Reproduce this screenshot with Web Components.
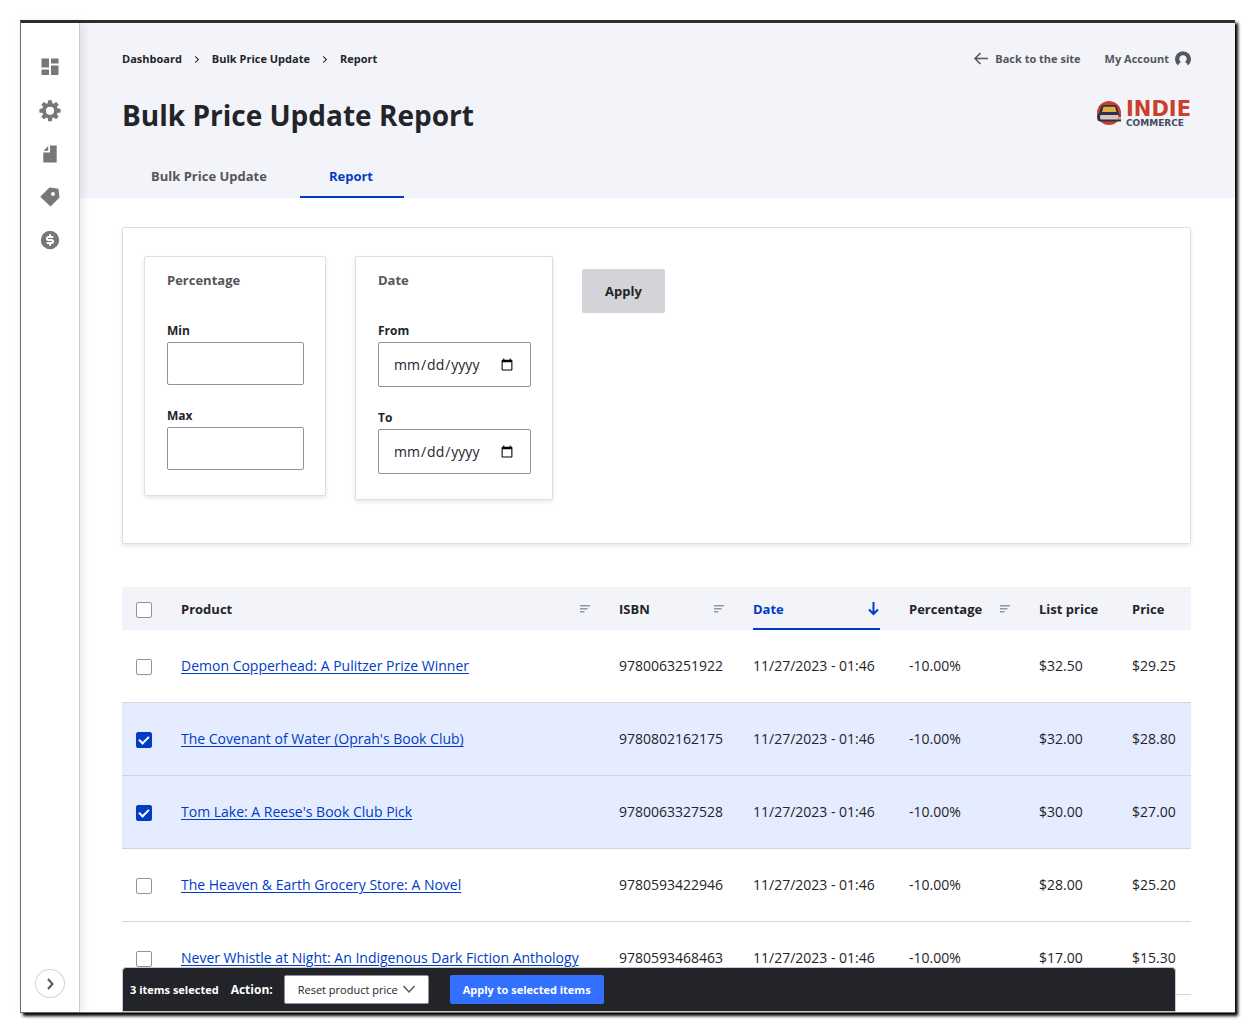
<!DOCTYPE html>
<html lang="en">
<head>
<meta charset="utf-8">
<title>Bulk Price Update Report</title>
<style>
html,body{margin:0;height:100%}
body{box-sizing:border-box;padding:20px;background:#fff;color:#232429;font:14px/20px "Open Sans","Noto Sans",sans-serif;
--ink:#232429;--muted:#55565b;--blue:#003cc5;--pale:#f3f4f9;--line:#d4d4d8}
</style>
</head>
<body>
<app-window>
  <side-bar slot="side"></side-bar>
  <page-header heading="Bulk Price Update Report"></page-header>
  <filter-panel>
    <filter-group legend="Percentage">
      <form-field label="Min" type="text"></form-field>
      <form-field label="Max" type="text"></form-field>
    </filter-group>
    <filter-group legend="Date">
      <form-field label="From" type="date"></form-field>
      <form-field label="To" type="date"></form-field>
    </filter-group>
  </filter-panel>
  <price-table></price-table>
  <bulk-actions slot="overlay"></bulk-actions>
</app-window>
<script>
const define = (name, html) => customElements.define(name, class extends HTMLElement {
  constructor(){ super(); this.attachShadow({mode:'open'}); }
  connectedCallback(){
    this.shadowRoot.innerHTML = '<style>*{box-sizing:border-box}</style>' + (typeof html === 'function' ? html(this) : html);
  }
});

define('app-window', `
<style>
:host{display:flex;position:relative;height:100%;box-sizing:border-box;border:1px solid #6f7273;border-top:3px solid #2b2f30;border-right:0;background:#fff;box-shadow:3px 3px 3px #000}
main{flex:1;min-width:0;overflow:hidden}
</style>
<slot name="side"></slot><main><slot></slot></main><slot name="overlay"></slot>`);

define('side-bar', `
<style>
:host{display:flex;flex:0 0 59px;box-sizing:border-box;border-right:1px solid #ccc;box-shadow:2px 0 10px #0000001a;position:relative}
nav{flex:1;display:flex;flex-direction:column;align-items:center;justify-content:space-between;padding:33px 0 14px}
div{display:flex;flex-direction:column;gap:19px}
a{display:flex;width:24px;height:24px}
svg{display:block;width:24px;height:24px;fill:#777}
button{display:grid;place-items:center;width:30px;height:29px;padding:0;border:1px solid #d4d4d8;border-radius:50%;background:#fff}
button svg{width:14px;height:14px;fill:none;stroke:#55565b;stroke-width:2}
</style>
<nav aria-label="Administration">
<div>
<a href="#" aria-label="Dashboard"><svg viewBox="0 0 24 24"><path d="M3.500 2.500h7.500v9H3.500zM13 2.500h7.500v5H13zM3.500 13.500h7.500v5.500H3.500zM13 9.500h7.500v9.500H13z"/></svg></a>
<a href="#" aria-label="Configuration"><svg viewBox="0 0 24 24"><path fill-rule="evenodd" d="M10.200 1.200h3.600l.5 3 1.200.5 2.600-1.700 2.500 2.500-1.700 2.600.5 1.200 3.200.6v3.600l-3.200.5-.5 1.200 1.700 2.600-2.500 2.500-2.600-1.700-1.200.5-.5 3.200h-3.600l-.5-3.200-1.200-.5-2.600 1.700-2.500-2.500 1.700-2.600-.5-1.200-3.200-.5V9.900l3.200-.6.5-1.200-1.700-2.600 2.500-2.500 2.600 1.700 1.200-.5zM12 7.700a4.100 4.100 0 1 0 0 8.200 4.100 4.100 0 0 0 0-8.200z"/></svg></a>
<a href="#" aria-label="Content"><svg viewBox="0 0 24 24"><path d="M12 3.500h6.700v17H5.300V10.500H12zM10.200 4v4.700H5.500z"/></svg></a>
<a href="#" aria-label="Products"><svg viewBox="0 0 24 24"><path fill-rule="evenodd" d="M11.500 2.500 20.500 3.800l1 8.800-9 9L2.200 11.700zM15 7a2 2 0 1 0 0 4 2 2 0 0 0 0-4z"/></svg></a>
<a href="#" aria-label="Pricing"><svg viewBox="0 0 24 24"><circle cx="12" cy="12" r="9.200"/><path fill="none" stroke="#fff" stroke-width="2" d="M15.300 9H10.500a1.500 1.500 0 0 0 0 3h3a1.500 1.500 0 0 1 0 3H8.700M12 6.200v2.500M12 15.300v2.500"/></svg></a>
</div>
<button type="button" aria-label="Expand sidebar"><svg viewBox="0 0 14 14"><path d="m5 2 4.500 5L5 12"/></svg></button>
</nav>`);

define('indie-logo', `
<style>
:host{display:flex;align-items:center;gap:4px;margin-bottom:4px}
svg{display:block;width:26px;height:26px}
div{display:flex;flex-direction:column;align-items:flex-start;gap:1px}
b{font:700 21px/18px "DejaVu Sans",sans-serif;color:#cb3f2c}
span{font:700 9px/8px "DejaVu Sans",sans-serif;color:#454a5c}
</style>
<svg viewBox="0 0 26 26"><circle cx="13" cy="13" r="12" fill="#cb3f2c"/><path d="M7.500 5h11q2 0 2.500 2l2 7v1H25v6.500H4q-3-.5-3-4.500Q1 14 3 13.500L5 7q.5-2 2.500-2z" fill="#2b3050"/><path d="M7.500 6.800h11.500l1.500 5.200H6z" fill="#ddb23f"/><path d="M4.500 15h18v4.500h-18q-1.500-2 0-4.500z" fill="#d6c8b8"/><path d="M22.500 16.500H25v3h-2.500z" fill="#ddb23f"/></svg>
<div><b>INDIE</b><span>COMMERCE</span></div>`);

define('page-header', el => `
<style>
:host{display:flex;flex-direction:column;height:175px;padding:26px 44px 0 42px;box-sizing:border-box;background:var(--pale)}
.row,ol,.user,.tabs{display:flex;align-items:center}
.row{justify-content:space-between}
ol{list-style:none;margin:0;padding:0}
li{display:flex;align-items:center}
a{text-decoration:none}
.top a{font-size:11px;font-weight:700;color:var(--ink);display:flex;align-items:center}
li+li::before{content:"";width:4px;height:4px;margin:0 14px 0 11px;border:solid var(--ink);border-width:1px 1px 0 0;transform:rotate(45deg)}
.user{gap:24px}
.top .user a{color:var(--muted);gap:6px}
.user svg{display:block;width:16px;height:16px}
h1{margin:0;font-size:28px;line-height:36px}
.title{margin-top:28px}
.tabs{margin-top:auto;gap:2px}
.tabs a{padding:0 31px 0 29px;font-size:13px;line-height:44px;font-weight:700;color:var(--muted)}
.tabs a.on{color:var(--blue);box-shadow:inset 0 -2px var(--blue)}
</style>
<div class="row top">
<nav aria-label="Breadcrumb"><ol><li><a href="#">Dashboard</a></li><li><a href="#">Bulk Price Update</a></li><li><a href="#">Report</a></li></ol></nav>
<div class="user">
<a href="#"><svg viewBox="0 0 16 16" fill="none" stroke="#55565b" stroke-width="1.500"><path d="M15 7.500H2M7.500 2 2 7.500 7.500 13"/></svg>Back to the site</a>
<a href="#">My Account<svg viewBox="0 0 16 16"><path fill="#55565b" d="M3 14.500A8 8 0 1 1 13 14.500q-.5-2.500-3-3.500a3.700 3.700 0 1 0-4 0Q3.500 12 3 14.500z"/></svg></a>
</div></div>
<div class="row title"><h1>${el.getAttribute('heading')}</h1><indie-logo></indie-logo></div>
<nav class="tabs" aria-label="Tabs"><a href="#">Bulk Price Update</a><a href="#" class="on" aria-current="page">Report</a></nav>`);

define('filter-panel', `
<style>
:host{display:block;margin:29px 44px 0 42px}
form{display:flex;align-items:flex-start;gap:29px;padding:28px 21px 43px;border:1px solid #dedfe4;border-radius:2px;box-shadow:0 2px 4px #0000001a}
button{margin-top:13px;height:44px;padding:0 23px;border:0;border-radius:2px;background:#d4d4d8;color:var(--ink);font:700 13px/20px "Open Sans",sans-serif}
</style>
<form><slot></slot><button type="button">Apply</button></form>`);

define('filter-group', el => `
<style>
:host{display:block}
fieldset{margin:0;min-width:0;padding:13px 21px 25px 22px;border:1px solid #dedfe4;border-radius:2px;box-shadow:0 2px 4px #0000001a;display:flex;flex-direction:column}
legend{float:left;padding:0;font-size:13px;font-weight:700;color:var(--muted)}
.fields{display:flex;flex-direction:column;gap:20px;margin-top:30px}
</style>
<fieldset><legend>${el.getAttribute('legend')}</legend><div class="fields"><slot></slot></div></fieldset>`);

define('form-field', el => `
<style>
:host{display:flex;flex-direction:column}
label{font-size:12px;line-height:22px;font-weight:700}
input{height:43px;margin:0;padding:0 14px;border:1px solid #8e929c;border-radius:2px;background:#fff;color:var(--ink);font:14px/20px "Open Sans",sans-serif}
input[type=text]{width:137px}
input[type=date]{width:153px;height:45px}
</style>
<label for="field">${el.getAttribute('label')}</label><input id="field" type="${el.getAttribute('type')}">`);

const rows = [
  ['Demon Copperhead: A Pulitzer Prize Winner','9780063251922','$32.50','$29.25',0],
  ["The Covenant of Water (Oprah's Book Club)",'9780802162175','$32.00','$28.80',1],
  ["Tom Lake: A Reese's Book Club Pick",'9780063327528','$30.00','$27.00',1],
  ['The Heaven & Earth Grocery Store: A Novel','9780593422946','$28.00','$25.20',0],
  ['Never Whistle at Night: An Indigenous Dark Fiction Anthology','9780593468463','$17.00','$15.30',0]
];
const sortIcon = '<svg width="10" height="8" viewBox="0 0 10 8" aria-hidden="true"><path fill="#9397a8" d="M0 0h10v1.500H0zM0 3h7.500v1.500H0zM0 6h4.500v1.500H0z"/></svg>';
const esc = t => t.replace('&','&amp;');
define('price-table', `
<style>
:host{display:block;margin:43px 44px 0 42px}
table{width:100%;table-layout:fixed;border-collapse:separate;border-spacing:0}
th,td{padding:0 14px 0 15px;text-align:left;white-space:nowrap}
th:first-child,td:first-child{padding:0 14px}
thead th{height:43px;background:var(--pale);font-size:13px}
tbody td{height:73px;border-bottom:1px solid var(--line);font-size:14px}
.check{width:44px}.isbn{width:134px}.date{width:156px}.pct{width:130px}.list{width:93px}.price{width:74px}
th a{display:flex;align-items:center;justify-content:space-between;height:43px;color:inherit;text-decoration:none}
.date a{color:var(--blue);box-shadow:inset 0 -2px var(--blue)}
.chosen{background:#e5ecff}
td a{color:var(--blue);text-decoration:underline;text-underline-offset:2px}
input{appearance:none;display:grid;place-items:center;width:16px;height:16px;margin:2px 0 0;border:1px solid #8e929c;border-radius:2px;background:#fff}
input:checked{border-color:var(--blue);background:var(--blue)}
input:checked::before{content:"";width:8px;height:4px;margin-bottom:3px;border:solid #fff;border-width:0 0 2px 2px;transform:rotate(-45deg)}
</style>
<table><thead><tr>
<th class="check"><input type="checkbox" aria-label="Select all rows"></th>
<th class="product"><a href="#">Product${sortIcon}</a></th>
<th class="isbn"><a href="#">ISBN${sortIcon}</a></th>
<th class="date" aria-sort="descending"><a href="#">Date<svg width="13" height="14" viewBox="0 0 13 14" fill="none" stroke="#003cc5" stroke-width="2" aria-hidden="true"><path d="M6.500 0v12M2 7.500 6.500 12 11 7.500"/></svg></a></th>
<th class="pct"><a href="#">Percentage${sortIcon}</a></th>
<th class="list">List price</th><th class="price">Price</th></tr></thead>
<tbody>${rows.map(r => `<tr${r[4] ? ' class="chosen"' : ''}><td><input type="checkbox" aria-label="${esc(r[0])}"${r[4] ? ' checked' : ''}></td><td><a href="#">${esc(r[0])}</a></td><td>${r[1]}</td><td>11/27/2023 - 01:46</td><td>-10.00%</td><td>${r[2]}</td><td>${r[3]}</td></tr>`).join('')}</tbody></table>`);

define('bulk-actions', `
<style>
:host{position:absolute;left:101px;right:59px;bottom:0;display:flex;align-items:center;height:45px;padding:0 7px;box-sizing:border-box;border:1px solid #c9c9ce;border-radius:4px 4px 0 0;background:#232429;color:#fff}
.count{font-size:11px;font-weight:700}
label{margin:0 11px 0 12px;font-size:12px;font-weight:700}
.pick{display:flex;position:relative}
select{appearance:none;width:145px;height:29px;padding:0 28px 0 13px;border:1px solid #8e929c;border-radius:2px;background:#fff;color:var(--ink);font:11px/20px "Open Sans",sans-serif}
svg{position:absolute;right:14px;top:9px;pointer-events:none}
button{margin-left:21px;width:154px;height:29px;padding:0;border:0;border-radius:2px;background:#3370ff;color:#fff;font:700 11px/20px "Open Sans",sans-serif}
</style>
<span class="count">3 items selected</span><label for="action">Action:</label>
<span class="pick"><select id="action"><option>Reset product price</option></select><svg width="12" height="10" viewBox="0 0 12 10" fill="none" stroke="#55565b" stroke-width="1.500"><path d="m.5 2 5.500 6 5.500-6"/></svg></span>
<button type="button">Apply to selected items</button>`);
</script>
</body>
</html>
